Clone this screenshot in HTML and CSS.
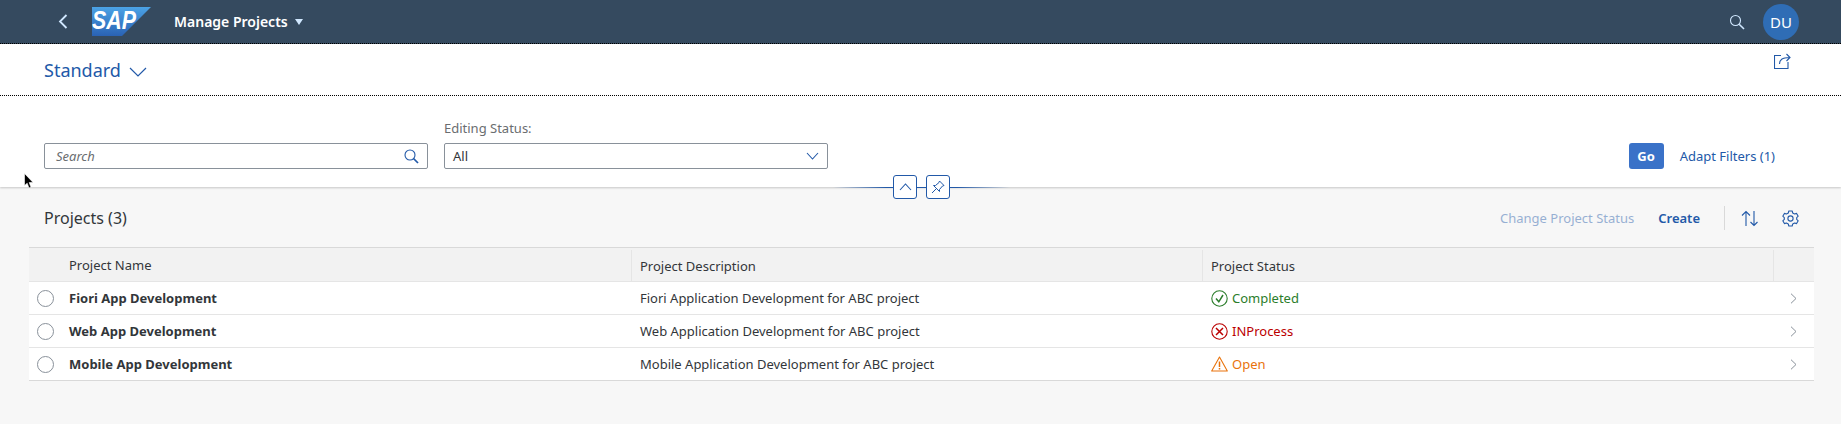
FILE: index.html
```html
<!DOCTYPE html>
<html lang="en">
<head>
    <meta charset="UTF-8">
    <meta name="viewport" content="width=device-width, initial-scale=1.0">
    <title>Manage Projects</title>
    <link rel="stylesheet" href="styles.css">
</head>
<body>
    <header class="shell">
        <svg class="shell-back" width="10" height="15" viewBox="0 0 10 15"><path d="M8.5 1 L2 7.5 L8.5 14" fill="none" stroke="#d1e8ff" stroke-width="1.8"/></svg>
        <svg class="shell-logo" width="59" height="29" viewBox="0 0 59 29">
            <defs><linearGradient id="logoFill" x1="0" y1="0" x2="0" y2="1"><stop offset="0" stop-color="#4ba3e6"/><stop offset="1" stop-color="#2a62b4"/></linearGradient></defs>
            <polygon points="0,0 59,0 30,29 0,29" fill="url(#logoFill)"/>
            <text class="logo-text" x="0" y="22" textLength="44" lengthAdjust="spacingAndGlyphs">SAP</text>
        </svg>
        <span class="shell-title">Manage Projects</span>
        <span class="shell-caret"></span>
        <svg class="shell-search" width="16" height="16" viewBox="0 0 16 16"><circle cx="6.5" cy="6.5" r="5" fill="none" stroke="#d1e8ff" stroke-width="1.1"/><path d="M10.2 10.2 L15 15" stroke="#d1e8ff" stroke-width="1.6"/></svg>
        <span class="avatar">DU</span>
    </header>

    <section class="title-bar">
        <span class="variant">Standard</span>
        <svg class="variant-arrow" width="18" height="10" viewBox="0 0 18 10"><path d="M1 1 L9 9 L17 1" fill="none" stroke="#2259a8" stroke-width="1.2"/></svg>
        <svg class="share" width="17" height="16" viewBox="0 0 17 16"><path d="M7 2.5 H0.5 V15.5 H14 V9" fill="none" stroke="#2259a8" stroke-width="1.1"/><path d="M5.5 11 C5.5 7 8 4.5 15.5 4.5 M12.5 1 L16 4.5 L12.5 8" fill="none" stroke="#2259a8" stroke-width="1.1"/></svg>
    </section>

    <section class="filter-bar">
        <div class="filter-item">
            <div class="input">
                <span class="placeholder">Search</span>
                <svg width="15" height="15" viewBox="0 0 15 15"><circle cx="6" cy="6" r="5" fill="none" stroke="#2259a8" stroke-width="1.1"/><path d="M9.5 9.5 L14 14" stroke="#2259a8" stroke-width="1.7"/></svg>
            </div>
        </div>
        <div class="filter-item">
            <label class="filter-label">Editing Status:</label>
            <div class="input">
                <span class="value">All</span>
                <svg width="13" height="8" viewBox="0 0 13 8"><path d="M1 1 L6.5 7 L12 1" fill="none" stroke="#2259a8" stroke-width="1.1"/></svg>
            </div>
        </div>
        <div class="filter-actions">
            <button class="btn-go">Go</button>
            <span class="link">Adapt Filters (1)</span>
        </div>
        <div class="expander">
            <span class="expander-btn"><svg width="13" height="8" viewBox="0 0 13 8"><path d="M1 7 L6.5 1 L12 7" fill="none" stroke="#2259a8" stroke-width="1.1"/></svg></span>
            <span class="expander-line"></span>
            <span class="expander-btn"><svg width="14" height="14" viewBox="0 0 14 14"><path d="M8.5 1 L13 5.5 L11.5 6 L8.5 9.5 L8.5 11.5 L2.5 5.5 L4.5 5.5 L8 2.5 Z M5 9 L1 13" fill="none" stroke="#2259a8" stroke-width="1"/></svg></span>
        </div>
    </section>

    <main class="content">
        <div class="toolbar">
            <span class="table-title">Projects (3)</span>
            <div class="toolbar-actions">
                <span class="link-disabled">Change Project Status</span>
                <span class="link-strong">Create</span>
                <span class="toolbar-sep"></span>
                <svg class="icon-sort" width="18" height="17" viewBox="0 0 18 17"><path d="M5 16 V1.5 M1 5.5 L5 1.5 L9 5.5" fill="none" stroke="#2259a8" stroke-width="1.1"/><path d="M13 1 V15.5 M9.5 12 L13 15.5 L16.5 12" fill="none" stroke="#2259a8" stroke-width="1.1"/></svg>
                <svg class="icon-gear" width="17" height="17" viewBox="0 0 17 17"><path d="M6.8 1 H10.2 L10.7 3 L12.6 4 L14.6 3.4 L16.2 6.2 L14.7 7.6 V9.4 L16.2 10.8 L14.6 13.6 L12.6 13 L10.7 14 L10.2 16 H6.8 L6.3 14 L4.4 13 L2.4 13.6 L0.8 10.8 L2.3 9.4 V7.6 L0.8 6.2 L2.4 3.4 L4.4 4 L6.3 3 Z" fill="none" stroke="#2259a8" stroke-width="1.1" stroke-linejoin="round"/><circle cx="8.5" cy="8.5" r="2.6" fill="none" stroke="#2259a8" stroke-width="1.1"/></svg>
            </div>
        </div>

        <div class="grid-table">
            <div class="row head">
                <div class="cell"></div>
                <div class="cell">Project Name</div>
                <div class="cell divider">Project Description</div>
                <div class="cell divider">Project Status</div>
                <div class="cell divider"></div>
            </div>
            <div class="row">
                <div class="cell"><span class="radio"></span></div>
                <div class="cell name">Fiori App Development</div>
                <div class="cell desc">Fiori Application Development for ABC project</div>
                <div class="cell status success">
                    <svg width="17" height="17" viewBox="0 0 17 17"><circle cx="8.5" cy="8.5" r="7.7" fill="none" stroke="#2b7d2b" stroke-width="1.1"/><path d="M5 8.5 L7.8 11.8 L12 5" fill="none" stroke="#2b7d2b" stroke-width="1.5"/></svg>
                    Completed
                </div>
                <div class="cell nav"><svg width="7" height="11" viewBox="0 0 7 11"><path d="M1 0.7 L6 5.5 L1 10.3" fill="none" stroke="#89919a" stroke-width="1"/></svg></div>
            </div>
            <div class="row">
                <div class="cell"><span class="radio"></span></div>
                <div class="cell name">Web App Development</div>
                <div class="cell desc">Web Application Development for ABC project</div>
                <div class="cell status error">
                    <svg width="17" height="17" viewBox="0 0 17 17"><circle cx="8.5" cy="8.5" r="7.7" fill="none" stroke="#bb0000" stroke-width="1.1"/><path d="M5 5 L12 12 M12 5 L5 12" fill="none" stroke="#bb0000" stroke-width="1.5"/></svg>
                    INProcess
                </div>
                <div class="cell nav"><svg width="7" height="11" viewBox="0 0 7 11"><path d="M1 0.7 L6 5.5 L1 10.3" fill="none" stroke="#89919a" stroke-width="1"/></svg></div>
            </div>
            <div class="row">
                <div class="cell"><span class="radio"></span></div>
                <div class="cell name">Mobile App Development</div>
                <div class="cell desc">Mobile Application Development for ABC project</div>
                <div class="cell status warning">
                    <svg width="17" height="16" viewBox="0 0 17 16"><path d="M8.5 1 L16.3 15 H0.7 Z" fill="none" stroke="#e9730c" stroke-width="1.1" stroke-linejoin="round"/><path d="M8.5 5.5 V11 M8.5 12 V13.5" stroke="#e9730c" stroke-width="1.5"/></svg>
                    Open
                </div>
                <div class="cell nav"><svg width="7" height="11" viewBox="0 0 7 11"><path d="M1 0.7 L6 5.5 L1 10.3" fill="none" stroke="#89919a" stroke-width="1"/></svg></div>
            </div>
        </div>
    </main>

    <svg class="cursor" width="10" height="16" viewBox="0 0 10 16"><path d="M0.5 0.5 V12.5 L3.2 10.2 L5 15 L7 14.2 L5.2 9.6 L9 9.4 Z" fill="#000" stroke="#fff" stroke-width="0.6"/></svg>
</body>
</html>
```

FILE: styles.css
```css
* {
    box-sizing: border-box;
}
html, body {
    height: 100%;
}
body {
    margin: 0;
    font-family: "Noto Sans", Arial, sans-serif;
    font-size: 13px;
    color: #32363a;
    background-color: #f7f7f7;
    position: relative;
    overflow: hidden;
}

/* shell bar */
.shell {
    height: 44px;
    background-color: #354a5f;
    border-bottom: 1px dotted #000;
    display: flex;
    align-items: center;
    padding: 0 42px 0 58px;
}
.shell-back {
    margin-right: 24px;
}
.shell-logo {
    margin-right: 23px;
}
.logo-text {
    font-family: "Liberation Sans", Arial, sans-serif;
    font-weight: 700;
    font-style: italic;
    font-size: 25px;
    fill: #fff;
}
.shell-title {
    color: #fff;
    font-size: 14px;
    font-weight: 600;
}
.shell-caret {
    width: 0;
    height: 0;
    margin-left: 7px;
    border-left: 4.5px solid transparent;
    border-right: 4.5px solid transparent;
    border-top: 6px solid #d1e8ff;
}
.shell-search {
    margin-left: auto;
    margin-right: 18px;
}
.avatar {
    width: 36px;
    height: 36px;
    border-radius: 50%;
    background-color: #2f6db5;
    color: #fff;
    font-size: 15px;
    display: flex;
    align-items: center;
    justify-content: center;
}

/* variant title */
.title-bar {
    height: 52px;
    background-color: #fff;
    border-bottom: 1px dotted #000;
    display: flex;
    align-items: center;
    padding: 0 50px 0 44px;
}
.variant {
    font-size: 18px;
    color: #2259a8;
}
.variant-arrow {
    margin-left: 8px;
    margin-top: 4px;
}
.share {
    margin-left: auto;
    margin-top: -18px;
}

/* filter bar */
.filter-bar {
    height: 91px;
    background-color: #fff;
    box-shadow: 0 1px 2px rgba(0, 0, 0, 0.2);
    display: flex;
    align-items: flex-end;
    gap: 16px;
    padding: 0 66px 18px 44px;
    position: relative;
}
.filter-item {
    width: 384px;
    display: flex;
    flex-direction: column;
}
.filter-label {
    font-size: 13px;
    color: #6a6d70;
    margin-bottom: 6px;
}
.input {
    height: 26px;
    border: 1px solid #89919a;
    border-radius: 2px;
    background-color: #fff;
    display: flex;
    align-items: center;
    justify-content: space-between;
    padding: 0 8px 0 8px;
}
.placeholder {
    font-style: italic;
    color: #6a6d70;
    padding-left: 3px;
}
.filter-actions {
    margin-left: auto;
    height: 26px;
    display: flex;
    align-items: center;
    gap: 16px;
}
.btn-go {
    width: 35px;
    height: 26px;
    border: none;
    border-radius: 3px;
    background-color: #3a72c8;
    color: #fff;
    font-family: inherit;
    font-size: 13px;
    font-weight: 700;
    padding: 0;
}
.link {
    color: #2259a8;
}

/* sits across the lower edge of the filter bar */
.expander {
    position: absolute;
    left: 833px;
    top: 79px;
    width: 177px;
    height: 24px;
    display: flex;
    align-items: center;
    justify-content: center;
    background: linear-gradient(to right, transparent, #2259a8 30%, #2259a8 70%, transparent) center / 100% 1px no-repeat;
}
.expander-line {
    width: 9px;
}
.expander-btn {
    width: 24px;
    height: 24px;
    border: 1px solid #2259a8;
    border-radius: 3px;
    background-color: #fff;
    display: flex;
    align-items: center;
    justify-content: center;
}

/* table area */
.content {
    padding: 0 27px 0 29px;
}
.toolbar {
    height: 60px;
    display: flex;
    align-items: center;
    justify-content: space-between;
    padding: 2px 15px 0 15px;
}
.table-title {
    font-size: 16px;
    color: #32363a;
}
.toolbar-actions {
    display: flex;
    align-items: center;
}
.link-disabled {
    color: #2259a8;
    opacity: 0.45;
    margin-right: 24px;
}
.link-strong {
    color: #2259a8;
    font-weight: 600;
    margin-right: 24px;
}
.toolbar-sep {
    width: 1px;
    height: 24px;
    background-color: #d9d9d9;
    margin-right: 16px;
}
.icon-gear {
    margin-left: 23px;
}

.grid-table {
    border-top: 1px solid #d9d9d9;
}
.row {
    display: grid;
    grid-template-columns: 32px 570px 571px 571px 41px;
    height: 33px;
    background-color: #fff;
    border-bottom: 1px solid #e5e5e5;
}
.row:last-child {
    border-bottom-color: #d9d9d9;
}
.row.head {
    height: 34px;
    background-color: #f2f2f2;
}
.cell {
    display: flex;
    align-items: center;
    padding-left: 8px;
}
.head .cell {
    color: #32363a;
}
.divider {
    position: relative;
}
.head .divider {
    border-left: 1px solid #e5e5e5;
    margin-top: 2px;
}
.desc, .status {
    padding-left: 9px;
}
.name {
    font-weight: 700;
}
.radio {
    width: 17px;
    height: 17px;
    border: 1px solid #89919a;
    border-radius: 50%;
    background-color: #fff;
}
.status svg {
    margin-right: 4px;
}
.success {
    color: #2b7d2b;
}
.error {
    color: #bb0000;
}
.warning {
    color: #e9730c;
}
.nav {
    padding-left: 17px;
}
.cursor {
    position: absolute;
    left: 24px;
    top: 173px;
}
```
